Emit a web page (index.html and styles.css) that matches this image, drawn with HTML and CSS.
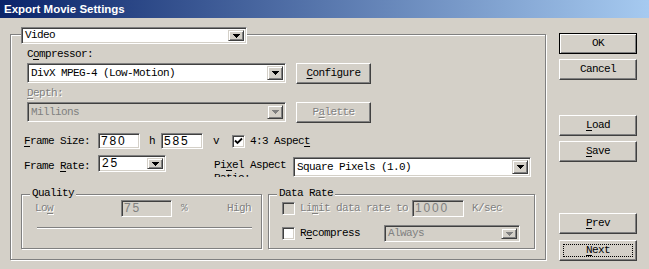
FILE: index.html
```html
<!DOCTYPE html>
<html lang="en">
<head>
  <meta charset="UTF-8" />
  <title>Export Movie Settings</title>
  <link rel="stylesheet" href="styles.css">
</head>
<body>
  <div class="titlebar">Export Movie Settings</div>

  <div class="dialog">
    <div class="main">
      <div class="group outer">
        <div class="combo video">
          <span class="val">Video</span>
          <span class="arrow"><svg width="7" height="4"><path d="M0 0H7V1H6V2H5V3H4V4H3V3H2V2H1V1H0Z"/></svg></span>
        </div>

        <div class="lbl lbl-first">C<u>o</u>mpressor:</div>
        <div class="row pick-row">
          <div class="combo wide">
            <span class="val">DivX MPEG-4 (Low-Motion)</span>
            <span class="arrow"><svg width="7" height="4"><path d="M0 0H7V1H6V2H5V3H4V4H3V3H2V2H1V1H0Z"/></svg></span>
          </div>
          <button class="btn side-btn"><u>C</u>onfigure</button>
        </div>

        <div class="lbl lbl-depth off"><u>D</u>epth:</div>
        <div class="row pick-row">
          <div class="combo wide disabled">
            <span class="val">Millions</span>
            <span class="arrow"><svg width="7" height="4"><path d="M0 0H7V1H6V2H5V3H4V4H3V3H2V2H1V1H0Z"/></svg></span>
          </div>
          <button class="btn side-btn off">P<u>a</u>lette</button>
        </div>

        <div class="row size-row">
          <span class="fl"><u>F</u>rame Size:</span>
          <span class="field num">780</span>
          <span class="unit unit-h">h</span>
          <span class="field num">585</span>
          <span class="unit unit-v">v</span>
          <span class="check chk-aspect"><svg width="9" height="9"><path d="M1 3.5L3.5 6L8 1.5" fill="none" stroke="#000" stroke-width="1.8"/></svg></span>
          <span class="chk-text">4:3 Aspec<u>t</u></span>
        </div>

        <div class="row rate-row">
          <span class="fl">Frame <u>R</u>ate:</span>
          <div class="combo rate">
            <span class="val num-val">25</span>
            <span class="arrow"><svg width="7" height="4"><path d="M0 0H7V1H6V2H5V3H4V4H3V3H2V2H1V1H0Z"/></svg></span>
          </div>
          <span class="pixel-lbl">Pi<u>x</u>el Aspect Ratio:</span>
          <div class="combo pixel">
            <span class="val">Square Pixels (1.0)</span>
            <span class="arrow"><svg width="7" height="4"><path d="M0 0H7V1H6V2H5V3H4V4H3V3H2V2H1V1H0Z"/></svg></span>
          </div>
        </div>

        <div class="row groups">
          <div class="group quality">
            <span class="gtitle">Quality</span>
            <div class="row q-row">
              <span class="off">Lo<u>w</u></span>
              <span class="field num q-val disabled">75</span>
              <span class="off pct">%</span>
              <span class="off high">High</span>
            </div>
            <div class="track"></div>
          </div>

          <div class="group datarate">
            <span class="gtitle">Data Rate</span>
            <div class="row d-row">
              <span class="check disabled"></span>
              <span class="chk-text off">Li<u>m</u>it data rate to</span>
              <span class="field num d-val disabled">1000</span>
              <span class="off ksec">K/sec</span>
            </div>
            <div class="row d-row d-row2">
              <span class="check"></span>
              <span class="chk-text">R<u>e</u>compress</span>
              <div class="combo always disabled">
                <span class="val">Always</span>
                <span class="arrow"><svg width="7" height="4"><path d="M0 0H7V1H6V2H5V3H4V4H3V3H2V2H1V1H0Z"/></svg></span>
              </div>
            </div>
          </div>
        </div>
      </div>
    </div>

    <div class="side">
      <button class="btn default">OK</button>
      <button class="btn gap-s">Cancel</button>
      <button class="btn gap-l"><u>L</u>oad</button>
      <button class="btn gap-s"><u>S</u>ave</button>
      <button class="btn gap-xl"><u>P</u>rev</button>
      <button class="btn gap-n focus"><u>N</u>ext</button>
    </div>
  </div>
</body>
</html>
```

FILE: styles.css
```css
* {
  box-sizing: border-box;
}

body {
  margin: 0;
  width: 649px;
  height: 269px;
  overflow: hidden;
  background: #d4d0c8;
  color: #000;
  font-family: "Liberation Mono", monospace;
  font-size: 11px;
  line-height: 13px;
  letter-spacing: -0.6px;
}

u {
  text-underline-offset: 2px;
}

.titlebar {
  height: 18px;
  padding-left: 4px;
  background: linear-gradient(to right, #0a246a, #a6caf0);
  color: #fff;
  font: bold 11.5px/18px "Liberation Sans", sans-serif;
  letter-spacing: 0;
}

.dialog {
  display: flex;
}

.main {
  padding: 16px 0 0 10px;
}

.row {
  display: flex;
  align-items: center;
}

/* etched group boxes */
.group {
  border: 1px solid #808080;
  box-shadow: 1px 1px 0 #fff, inset 1px 1px 0 #fff;
}

.outer {
  width: 536px;
  padding: 0 10px 10px 10px;
}

.gtitle {
  display: block;
  width: fit-content;
  margin: -8px 0 0 8px;
  padding: 0 2px;
  background: #d4d0c8;
}

.off {
  color: #808080;
  text-shadow: 1px 1px 0 #fff;
}

/* sunken fields */
.field,
.combo,
.check {
  border: 1px solid;
  border-color: #808080 #fff #fff #808080;
  box-shadow: inset 1px 1px 0 #404040, inset -1px -1px 0 #d4d0c8;
  background: #fff;
}

.field.disabled,
.combo.disabled,
.check.disabled {
  background: #d4d0c8;
  color: #808080;
}

.num {
  display: flex;
  align-items: center;
  padding-left: 2px;
  font-family: "Liberation Sans", sans-serif;
  font-size: 12px;
  letter-spacing: 1.8px;
}

.combo {
  display: flex;
  padding: 2px;
}

.combo .val {
  flex: 1;
  align-self: center;
  padding-left: 1px;
  white-space: nowrap;
  overflow: hidden;
}

.combo .num-val {
  font-family: "Liberation Sans", sans-serif;
  font-size: 12px;
  letter-spacing: 1.8px;
}

.arrow {
  width: 16px;
  display: flex;
  align-items: center;
  justify-content: center;
  background: #d4d0c8;
  border: 1px solid;
  border-color: #d4d0c8 #404040 #404040 #d4d0c8;
  box-shadow: inset 1px 1px 0 #fff, inset -1px -1px 0 #808080;
}

.arrow path {
  fill: #000;
}

.disabled .arrow path {
  fill: #808080;
}

.check {
  width: 13px;
  height: 13px;
  display: flex;
  align-items: center;
  justify-content: center;
  padding: 0;
}

/* buttons */
.btn {
  display: block;
  padding: 0;
  height: 21px;
  font: inherit;
  letter-spacing: inherit;
  color: #000;
  background: #d4d0c8;
  border: 1px solid;
  border-color: #fff #404040 #404040 #fff;
  box-shadow: inset -1px -1px 0 #808080;
}

.btn.off {
  color: #808080;
}

.btn.default {
  border-color: #000;
  box-shadow: inset 1px 1px 0 #fff, inset -1px -1px 0 #808080;
}

.btn.focus {
  outline: 1px dotted #000;
  outline-offset: -5px;
}

/* top section */
.video {
  width: 226px;
  height: 17px;
  margin-top: -8px;
}

.lbl {
  padding-left: 6px;
}

.lbl-first {
  margin-top: 4px;
}

.lbl-depth {
  margin-top: 3px;
}

.pick-row {
  margin-top: 2px;
  padding-left: 6px;
  align-items: flex-start;
}

.wide {
  width: 259px;
  height: 20px;
}

.side-btn {
  width: 75px;
  margin-left: 10px;
}

/* frame rows */
.fl {
  width: 77px;
  padding-left: 3px;
  flex-shrink: 0;
}

.size-row {
  margin-top: 10px;
  height: 16px;
}

.size-row .field {
  width: 42px;
  height: 16px;
}

.unit-h {
  margin: 0 6px 0 9px;
}

.unit-v {
  margin-left: 10px;
}

.chk-aspect {
  margin-left: 13px;
}

.chk-text {
  margin-left: 5px;
}

.rate-row {
  margin-top: 6px;
  align-items: flex-start;
}

.rate-row .fl {
  align-self: center;
}

.rate {
  width: 68px;
  height: 17px;
}

.pixel-lbl {
  width: 77px;
  height: 18px;
  margin: 4px 0 0 48px;
  overflow: hidden;
}

.pixel {
  width: 238px;
  height: 20px;
  margin: 2px 0 0 2px;
}

/* group boxes row */
.groups {
  margin-top: 17px;
  gap: 6px;
  align-items: flex-start;
}

.quality {
  width: 241px;
  height: 55px;
}

.datarate {
  width: 267px;
  height: 55px;
}

.q-row {
  height: 17px;
  padding-left: 13px;
}

.q-val {
  width: 51px;
  height: 17px;
  margin-left: 68px;
}

.pct {
  margin-left: 9px;
}

.high {
  margin-left: 40px;
}

.track {
  width: 215px;
  height: 2px;
  margin: 10px 0 0 15px;
  border-top: 1px solid #808080;
  border-bottom: 1px solid #fff;
}

.d-row {
  height: 17px;
  padding-left: 13px;
}

.d-row2 {
  margin-top: 8px;
}

.d-val {
  width: 52px;
  height: 17px;
  margin-left: 4px;
}

.ksec {
  margin-left: 8px;
}

.always {
  width: 136px;
  height: 17px;
  margin-left: 24px;
}

/* right column */
.side {
  width: 78px;
  margin-left: 13px;
  padding-top: 15px;
}

.side .btn {
  width: 78px;
}

.gap-s {
  margin-top: 5px;
}

.gap-l {
  margin-top: 35px;
}

.gap-xl {
  margin-top: 51px;
}

.gap-n {
  margin-top: 6px;
}
```
